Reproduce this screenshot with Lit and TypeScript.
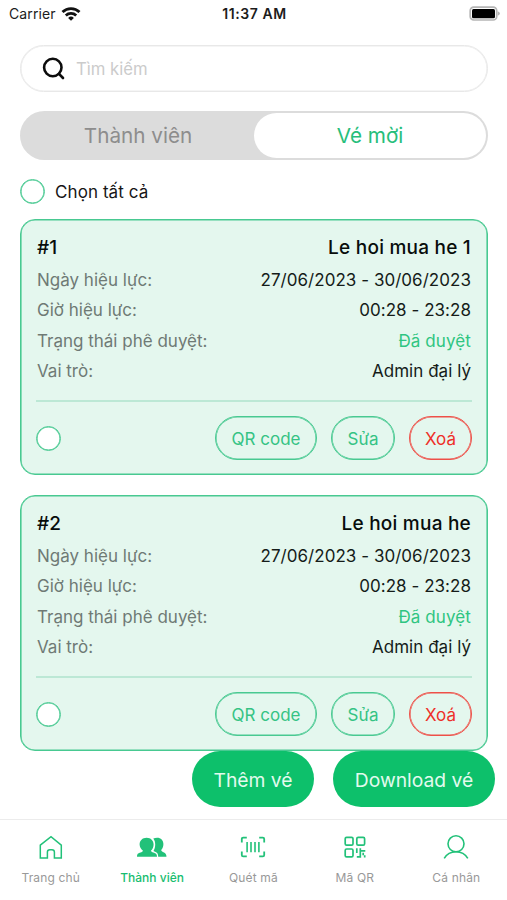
import { LitElement, html, svg, css } from "lit";
import { customElement, property } from "lit/decorators.js";
import { classMap } from "lit/directives/class-map.js";

interface Ticket {
  id: string;
  name: string;
  dates: string;
  hours: string;
  status: string;
  role: string;
}

const TICKETS: Ticket[] = [
  { id: "#1", name: "Le hoi mua he 1", dates: "27/06/2023 - 30/06/2023", hours: "00:28 - 23:28", status: "Đã duyệt", role: "Admin đại lý" },
  { id: "#2", name: "Le hoi mua he", dates: "27/06/2023 - 30/06/2023", hours: "00:28 - 23:28", status: "Đã duyệt", role: "Admin đại lý" },
];

const homeIcon = svg`<path d="M2.300 11.200 13 2.600l10.300 8.600v12.900h-6.900v-6q0-2.400-2.400-2.400h-2.200q-2.400 0-2.400 2.400v6H2.300Z"/>`;
const membersIcon = svg`<g fill="currentColor" stroke="none">
  <path d="M7.600 3.800c4.200 0 7 2.900 7 6.600 0 2.600-1 4.800-2.700 6.300.3 1.800 4.300 1.900 5.400 3.300.5.700.7 1.700.7 2.800H-2c0-1.100.1-2.100.6-2.800 1.100-1.400 5-1.500 5.400-3.300C2.100 15.200.6 13 .6 10.400c0-3.700 2.800-6.600 7-6.600Z"/>
  <path d="M14.300 4.500c1.200-.5 2.400-.7 3.800-.7 3.800 0 6.300 2.600 6.300 6.200 0 2.600-.7 4.400-2.200 6 .3 2.100 3.400 2.200 4.500 3.900.5.700.8 1.800.8 2.900h-8.300c-.1-2.300-.4-3.700-2.100-4.600-1.200-.6-2.100-.8-2.600-1.300 1.100-1.700 1.700-3.900 1.700-6.300 0-2.400-.5-4.200-1.900-6.100Z"/>
</g>`;
const scanIcon = svg`<g stroke-width="1.800"><path d="M1.800 8.600V5q0-1.400 1.400-1.400h3.600M19.200 3.600h3.600q1.400 0 1.400 1.400v3.600M24.200 17.400V21q0 1.400-1.400 1.400h-3.600M6.800 22.400H3.200q-1.400 0-1.400-1.400v-3.600"/><path d="M7.100 8v10.200M11 8v10.200M15 8v10.200M18.900 8v10.200" stroke-width="1.600"/></g>`;
const qrIcon = svg`<g stroke-width="1.700"><rect x="3.200" y="3.400" width="7.800" height="7.800" rx="1.400"/><rect x="14.800" y="3.400" width="7.800" height="7.800" rx="1.400"/><rect x="3.200" y="15" width="7.800" height="7.800" rx="1.400"/><path d="M14.800 14.300v4.600M18.300 14.300v8.500h-3.500M18.300 16.900h5M21.200 18.800v2.400M22.700 21.200v2.400"/></g>`;
const personIcon = svg`<g stroke-width="1.600"><circle cx="13" cy="9.800" r="8"/><path d="M1.200 24.300c2.500-4.200 6.800-6.600 11.800-6.600s9.300 2.400 11.800 6.600"/></g>`;

const NAV = [
  { label: "Trang chủ", icon: homeIcon, active: false },
  { label: "Thành viên", icon: membersIcon, active: true },
  { label: "Quét mã", icon: scanIcon, active: false },
  { label: "Mã QR", icon: qrIcon, active: false },
  { label: "Cá nhân", icon: personIcon, active: false },
];

@customElement("ticket-card")
export class TicketCard extends LitElement {
  @property({ attribute: false }) ticket!: Ticket;

  static styles = css`
    :host {
      display: flex;
      flex-direction: column;
      box-sizing: border-box;
      height: 256px;
      padding: 11.500px 15px 0;
      border: 1px solid #48c991;
      box-shadow: inset 0 0 0 0.600px #48c991;
      border-radius: 15px;
      background: #e4f7ee;
    }
    .row {
      display: flex;
      justify-content: space-between;
      height: 30.600px;
      margin: 0 1px;
      line-height: 30.600px;
      font-size: 17px;
      color: #151c19;
      white-space: nowrap;
    }
    .label { color: #6f7a75; letter-spacing: 0; }
    .value { letter-spacing: 0.040px; }
    .row.head {
      height: 33px;
      line-height: 31px;
      font-size: 19px;
      font-weight: 500;
      letter-spacing: 0.230px;
      color: #080d0b;
    }
    .value.approved { color: #2fc581; letter-spacing: 0.100px; }
    .foot {
      display: flex;
      align-items: center;
      gap: 14px;
      margin-top: 13.500px;
      padding-top: 14px;
      border-top: 2px solid #bce8d5;
    }
    .check {
      box-sizing: border-box;
      width: 25px;
      height: 25px;
      margin-right: auto;
      border: 1px solid #48c991;
      box-shadow: inset 0 0 0 0.600px #48c991;
      border-radius: 50%;
      background: #fff;
    }
    .btn {
      box-sizing: border-box;
      height: 43.500px;
      padding: 1px 0 0;
      width: 64px;
      border: 1px solid #48c991;
      box-shadow: inset 0 0 0 0.600px #48c991;
      border-radius: 22px;
      background: none;
      color: #35c384;
      font: 400 17px Inter, sans-serif;
    }
    .wide { width: 102px; }
    .danger { width: 63px; border-color: #ee5048; box-shadow: inset 0 0 0 0.600px #ee5048; color: #ee3029; }
  `;

  render() {
    const t = this.ticket;
    return html`
      <div class="row head"><span>${t.id}</span><span>${t.name}</span></div>
      <div class="row"><span class="label">Ngày hiệu lực:</span><span class="value">${t.dates}</span></div>
      <div class="row"><span class="label">Giờ hiệu lực:</span><span class="value">${t.hours}</span></div>
      <div class="row"><span class="label">Trạng thái phê duyệt:</span><span class="value approved">${t.status}</span></div>
      <div class="row"><span class="label">Vai trò:</span><span class="value">${t.role}</span></div>
      <div class="foot">
        <span class="check"></span>
        <button class="btn wide">QR code</button>
        <button class="btn">Sửa</button>
        <button class="btn danger">Xoá</button>
      </div>
    `;
  }
}

@customElement("app-root")
export class AppRoot extends LitElement {
  static styles = css`
    :host {
      display: flex;
      flex-direction: column;
      position: relative;
      width: 507px;
      height: 900px;
      overflow: hidden;
      background: #fff;
      font-family: Inter, "Noto Sans", sans-serif;
    }
    .status {
      display: grid;
      grid-template-columns: 1fr auto 1fr;
      align-items: center;
      height: 27px;
      padding: 0 7px 0 9px;
      font-size: 14px;
      color: #1c1c1c;
    }
    .carrier { display: flex; align-items: center; gap: 5px; letter-spacing: 0.100px; }
    .time { font-weight: 600; letter-spacing: 0.550px; }
    .battery { justify-self: end; }
    .status svg, .search svg, .item svg { display: block; }
    .search {
      display: flex;
      align-items: center;
      box-sizing: border-box;
      height: 47px;
      margin: 18px 19px 0 20px;
      padding: 0 21px;
      gap: 11px;
      border: 1px solid #e8e8e8;
      box-shadow: inset 0 0 0 0.600px #ebebeb;
      border-radius: 24px;
      font-size: 16.700px;
      color: #cbcbcb;
    }
    .tabs {
      display: flex;
      box-sizing: border-box;
      height: 49px;
      margin: 19px 19px 0 20px;
      padding: 2px;
      border-radius: 25px;
      background: #dcdcdc;
      font-size: 20.700px;
      line-height: 45px;
      text-align: center;
      color: #8d8d8d;
    }
    .tab { flex: 1; border-radius: 23px; }
    .on { background: #fff; color: #27be7b; }
    .all {
      display: flex;
      align-items: center;
      gap: 10px;
      height: 25px;
      margin: 19px 20px 0;
      font-size: 17px;
      letter-spacing: 0.080px;
      color: #161616;
    }
    .check {
      box-sizing: border-box;
      width: 25px;
      height: 25px;
      border: 1px solid #48c991;
      box-shadow: inset 0 0 0 0.600px #48c991;
      border-radius: 50%;
    }
    .cards {
      display: flex;
      flex-direction: column;
      gap: 20px;
      margin: 15px 19px 0 20px;
    }
    .actions {
      position: absolute;
      right: 12px;
      bottom: 93px;
      display: flex;
      gap: 19px;
    }
    .action {
      width: 122px;
      height: 56px;
      padding: 1px 0 0;
      border: 0;
      border-radius: 28px;
      background: #0dc06b;
      color: #e2faee;
      font: 400 19.300px Inter, sans-serif;
    }
    .long { width: 162px; }
    .nav {
      display: grid;
      grid-template-columns: repeat(5, 1fr);
      box-sizing: border-box;
      height: 81px;
      margin-top: auto;
      padding: 14px 0 0;
      border-top: 1px solid #ececec;
    }
    .item {
      display: flex;
      flex-direction: column;
      align-items: center;
      gap: 10px;
      color: #22c179;
      font-size: 12px;
      line-height: 16px;
    }
    .name { color: #999; letter-spacing: 0.150px; }
    .current { color: #18bd70; font-weight: 500; letter-spacing: 0; }
  `;

  render() {
    return html`
      <header class="status">
        <span class="carrier">
          <span>Carrier</span>
          <svg width="20" height="16" viewBox="0 0 20 16" fill="none" stroke="#111" stroke-width="2.800">
            <path d="M1.500 6a12.200 12.200 0 0 1 17 0M4.800 9.400a7.600 7.600 0 0 1 10.400 0"/>
            <path d="m10 14.800-2.900-2.900a4.100 4.100 0 0 1 5.800 0Z" fill="#111" stroke="none"/>
          </svg>
        </span>
        <span class="time">11:37 AM</span>
        <svg class="battery" width="31" height="15" viewBox="0 0 31 15">
          <rect x="1.200" y="1.200" width="26.500" height="12.800" rx="3.500" fill="#fff" stroke="#b5b5b5" stroke-width="1.700"/>
          <rect x="3" y="3" width="23" height="9.300" rx="1.500" fill="#000"/>
          <path d="M28.700 5.300q2.200 1 2.200 2.200t-2.200 2.200Z" fill="#b5b5b5"/>
        </svg>
      </header>
      <div class="search">
        <svg width="23" height="23" viewBox="0 0 23 23" fill="none" stroke="#0c0c0c" stroke-width="2.600" stroke-linecap="round">
          <circle cx="10.800" cy="10.500" r="8.700"/><path d="m17 16.800 4 4.200"/>
        </svg>
        <span>Tìm kiếm</span>
      </div>
      <div class="tabs">
        <span class="tab">Thành viên</span>
        <span class="tab on">Vé mời</span>
      </div>
      <div class="all"><span class="check"></span><span>Chọn tất cả</span></div>
      <main class="cards">
        ${TICKETS.map((t) => html`<ticket-card .ticket=${t}></ticket-card>`)}
      </main>
      <div class="actions">
        <button class="action">Thêm vé</button>
        <button class="action long">Download vé</button>
      </div>
      <nav class="nav">
        ${NAV.map(
          (n) => html`<div class="item">
            <svg width="26" height="26" viewBox="0 0 26 26" overflow="visible" fill="none" stroke="currentColor" stroke-width="1.500">${n.icon}</svg>
            <span class=${classMap({ name: true, current: n.active })}>${n.label}</span>
          </div>`
        )}
      </nav>
    `;
  }
}
